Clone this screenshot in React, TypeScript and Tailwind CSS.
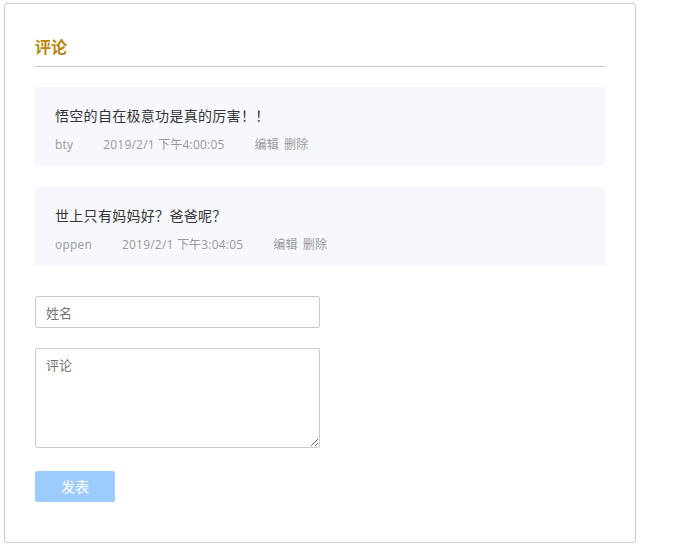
const comments = [
  { id: 1, content: "悟空的自在极意功是真的厉害！！", name: "bty", time: "2019/2/1 下午4:00:05" },
  { id: 2, content: "世上只有妈妈好？爸爸呢？", name: "oppen", time: "2019/2/1 下午3:04:05" },
]

export default function App() {
  return (
    <div className="pt-[3px] pl-1 font-['Noto_Sans_CJK_SC','Noto_Sans',sans-serif]">
      <div className="w-[632px] h-[540px] border border-[#cccccc] rounded-[3px] bg-white px-[30px] pt-[30px]">
        <h2 className="text-[16px] leading-6 font-bold text-[#b8860b] pb-2 border-b border-[#cccccc]">评论</h2>

        <div className="mt-5 space-y-[21px]">
          {comments.map(c => (
            <div key={c.id} className="bg-[#f7f8fd] px-5 pt-[18px] pb-3">
              <p className="text-[14px] leading-5 text-[#333333] tracking-[0.3px]">{c.content}</p>
              <div className="mt-[11px] text-[12px] leading-[18px] text-[#999999] tracking-[0.2px] flex font-['Open_Sans','Noto_Sans_CJK_SC',sans-serif]">
                <span className="mr-[30px]">{c.name}</span>
                <span className="mr-[30px]">{c.time}</span>
                <a className="mr-[5px] cursor-pointer">编辑</a>
                <a className="cursor-pointer">删除</a>
              </div>
            </div>
          ))}
        </div>

        <form className="mt-[30px]" onSubmit={e => e.preventDefault()}>
          <input
            type="text"
            placeholder="姓名"
            className="block w-[285px] h-8 px-[10px] border border-[#cccccc] rounded-[2px] text-[13px] placeholder:text-[#757575] outline-none"
          />
          <textarea
            placeholder="评论"
            className="block mt-5 w-[285px] h-[100px] px-[10px] py-[6px] border border-[#cccccc] rounded-[2px] text-[13px] placeholder:text-[#757575] outline-none"
          />
          <button
            type="submit"
            className="block mt-[23px] w-20 h-[31px] bg-[#9ccbfd] text-white text-[14px] rounded-[2px]"
          >
            发表
          </button>
        </form>
      </div>
    </div>
  )
}
